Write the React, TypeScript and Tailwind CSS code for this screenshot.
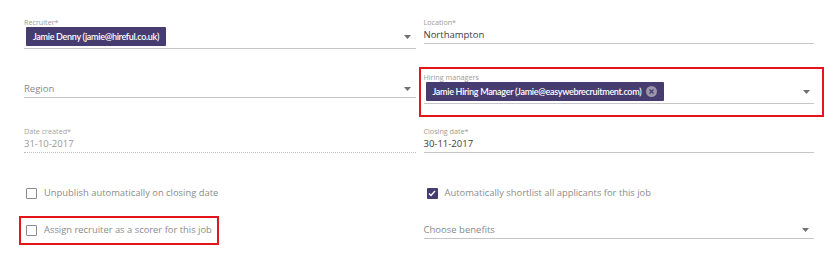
import React from 'react';

const Arrow = () => (
  <svg width="7" height="4" viewBox="0 0 7 4" className="shrink-0">
    <path d="M0 0h7L3.5 4z" fill="#707070" />
  </svg>
);

const Chip: React.FC<{ text: string; removable?: boolean }> = ({ text, removable }) => (
  <span className="inline-flex items-center h-[19px] px-[7px] bg-[#463c6f] text-white font-['Lato',sans-serif] font-semibold text-[9px] tracking-[-0.3px] rounded-[1px]">
    {text}
    {removable && (
      <span className="ml-[5px] w-[11px] h-[11px] rounded-full bg-[#9a95ab] flex items-center justify-center">
        <svg width="5" height="5" viewBox="0 0 5 5">
          <path d="M0.5 0.5l4 4M4.5 0.5l-4 4" stroke="#463c6f" strokeWidth="1.2" />
        </svg>
      </span>
    )}
  </span>
);

const Checkbox: React.FC<{ checked?: boolean; label: string }> = ({ checked, label }) => (
  <label className="flex items-center gap-[7px] whitespace-nowrap">
    {checked ? (
      <span className="w-[11px] h-[11px] bg-[#463c6f] rounded-[1px] flex items-center justify-center">
        <svg width="8" height="7" viewBox="0 0 8 7">
          <path d="M1 3.5l2 2L7 1" stroke="white" strokeWidth="1.4" fill="none" />
        </svg>
      </span>
    ) : (
      <span className="w-[11px] h-[11px] border border-[#8a8a8a] rounded-[1px] bg-white" />
    )}
    <span className="text-[9.4px] text-[#8c8c8c]">{label}</span>
  </label>
);

export default function App() {
  return (
    <div className="w-[840px] h-[258px] bg-white pl-[24px] pr-[26px] font-['Open_Sans',sans-serif] overflow-hidden">
      {/* row 1 */}
      <div className="grid grid-cols-2 gap-x-[9px] h-[58px] items-start">
        <div className="pt-[17px] pb-[2px] border-b border-[#c6c6c6] mr-[-1px]">
          <div className="text-[7.2px] leading-[10px] text-[#9b9b9b]">Recruiter*</div>
          <div className="flex items-center justify-between pl-[2px] pr-[5px]">
            <Chip text="Jamie Denny (jamie@hireful.co.uk)" />
            <Arrow />
          </div>
        </div>
        <div className="pt-[17px] border-b border-[#c6c6c6]">
          <div className="text-[7.2px] leading-[10px] text-[#9b9b9b]">Location*</div>
          <div className="text-[9.5px] leading-[16px] text-[#3d3d3d]">Northampton</div>
        </div>
      </div>

      {/* row 2 */}
      <div className="grid grid-cols-2 gap-x-[9px] h-[62px] items-start">
        <div className="pt-[23px] border-b border-[#c6c6c6] mr-[-1px]">
          <div className="flex items-center justify-between pr-[5px]">
            <span className="text-[9.5px] leading-[16px] text-[#8a8a8a]">Region</span>
            <Arrow />
          </div>
        </div>
        <div className="pt-[9px]">
          <div className="ml-[-5px] mr-[-10px] border-2 border-[#e3161b] pl-[3px] pr-[8px] pt-[3px] pb-[11px]">
            <div className="pb-[2px] border-b border-[#c6c6c6]">
              <div className="text-[7.2px] leading-[10px] text-[#9b9b9b]">Hiring managers</div>
              <div className="flex items-center justify-between pl-[2px] pr-[4px]">
                <Chip text="Jamie Hiring Manager (Jamie@easywebrecruitment.com)" removable />
                <Arrow />
              </div>
            </div>
          </div>
        </div>
      </div>

      {/* row 3 */}
      <div className="grid grid-cols-2 gap-x-[9px] h-[45px] items-start">
        <div className="pt-[6px] border-b border-dotted border-[#bdbdbd] mr-[-1px]">
          <div className="text-[7.2px] leading-[10px] text-[#a5a5a5]">Date created*</div>
          <div className="text-[9.5px] leading-[16px] text-[#9a9a9a]">31-10-2017</div>
        </div>
        <div className="pt-[6px] border-b border-[#c6c6c6]">
          <div className="text-[7.2px] leading-[10px] text-[#9b9b9b]">Closing date*</div>
          <div className="text-[9.5px] leading-[16px] text-[#3d3d3d]">30-11-2017</div>
        </div>
      </div>

      {/* row 4 */}
      <div className="grid grid-cols-2 gap-x-[9px] h-[51px] items-start">
        <div className="pt-[21px] pl-[2px]">
          <Checkbox label="Unpublish automatically on closing date" />
        </div>
        <div className="pt-[21px] pl-[3px]">
          <Checkbox checked label="Automatically shortlist all applicants for this job" />
        </div>
      </div>

      {/* row 5 */}
      <div className="grid grid-cols-2 gap-x-[9px] items-start">
        <div>
          <div className="ml-[-5px] w-[200px] h-[29px] border-2 border-[#e3161b] pl-[5px] flex items-center">
            <Checkbox label="Assign recruiter as a scorer for this job" />
          </div>
        </div>
        <div className="pt-[6px] border-b border-[#c6c6c6]">
          <div className="flex items-center justify-between pr-[5px]">
            <span className="text-[9.5px] leading-[16px] text-[#8a8a8a]">Choose benefits</span>
            <Arrow />
          </div>
        </div>
      </div>
    </div>
  );
}
